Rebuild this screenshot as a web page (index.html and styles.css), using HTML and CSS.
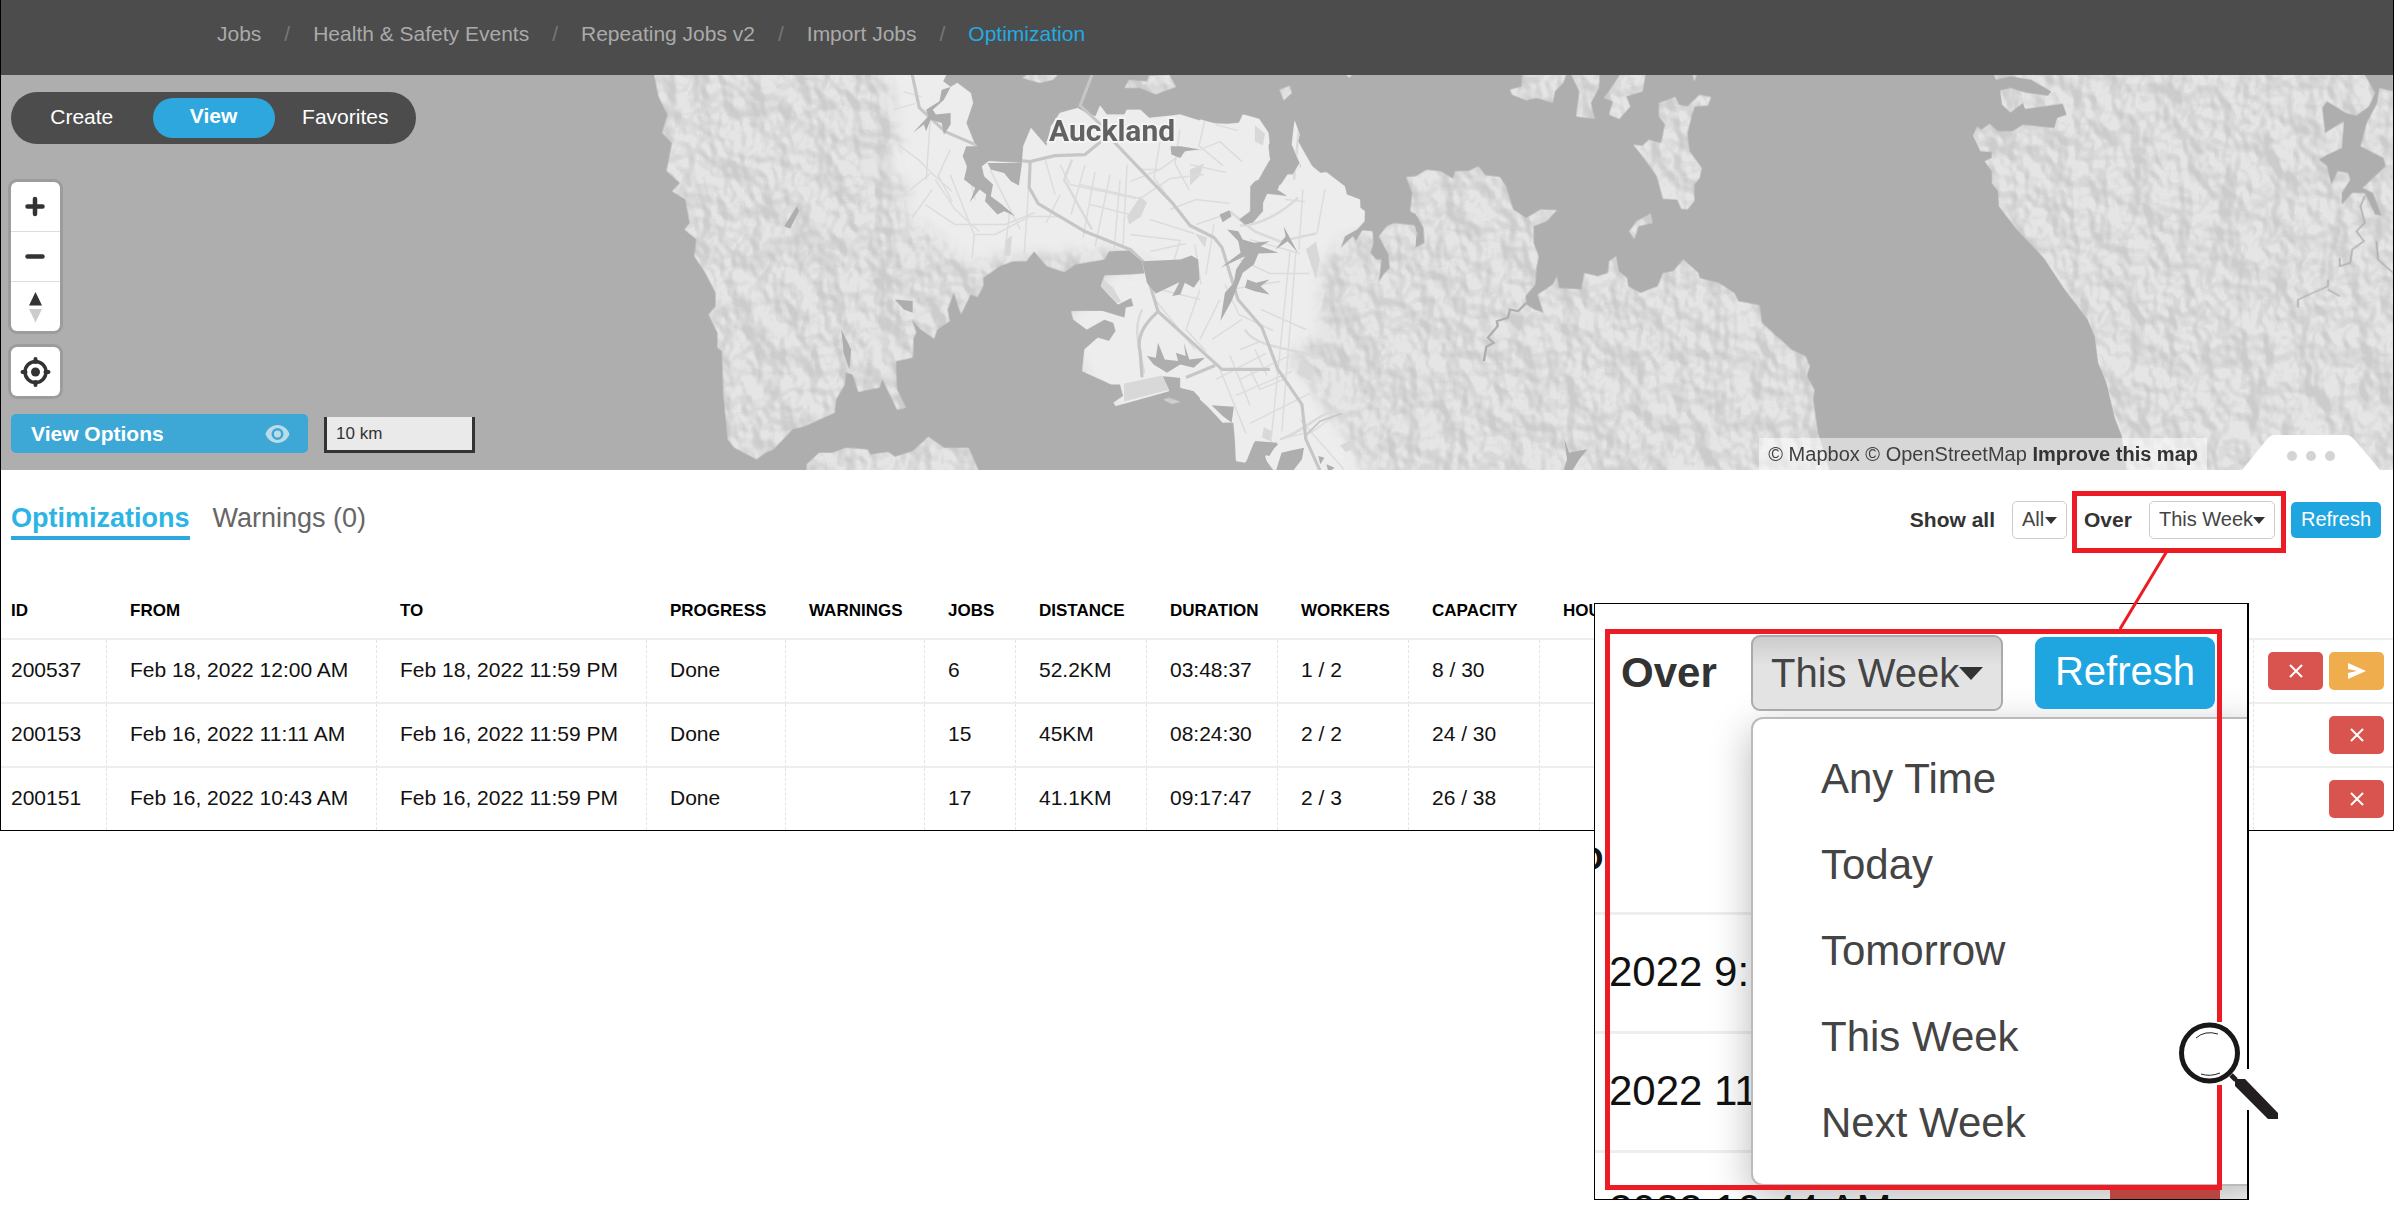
FILE: index.html
```html
<!DOCTYPE html>
<html lang="en">
<head>
<meta charset="utf-8">
<title>Optimization</title>
<link rel="stylesheet" href="styles.css">
</head>
<body>
<div class="page">
<div class="app">
  <nav class="topnav" aria-label="Sections">
    <a href="#">Jobs</a><span class="sep">/</span>
    <a href="#">Health &amp; Safety Events</a><span class="sep">/</span>
    <a href="#">Repeating Jobs v2</a><span class="sep">/</span>
    <a href="#">Import Jobs</a><span class="sep">/</span>
    <a href="#" class="current">Optimization</a>
  </nav>

  <section class="map" aria-label="Map">
    <svg class="map-art" viewBox="0 75 2394 396" preserveAspectRatio="xMidYMid slice" aria-hidden="true">
      <defs>
        <filter id="relief" x="0" y="0" width="100%" height="100%" color-interpolation-filters="sRGB">
          <feTurbulence type="fractalNoise" baseFrequency="0.035 0.028" numOctaves="3" seed="8" result="n"/>
          <feColorMatrix in="n" type="matrix" values="0 0 0 0 0  0 0 0 0 0  0 0 0 0 0  1 0 0 0 0" result="h"/>
          <feDiffuseLighting in="h" surfaceScale="18" diffuseConstant="1" lighting-color="#fff" result="l"><feDistantLight azimuth="315" elevation="50"/></feDiffuseLighting>
          <feComponentTransfer in="l" result="t">
            <feFuncR type="discrete" tableValues=".8 .81 .82 .83 .84 .85 .86 .87 .885 .9"/>
            <feFuncG type="discrete" tableValues=".8 .81 .82 .83 .84 .85 .86 .87 .885 .9"/>
            <feFuncB type="discrete" tableValues=".8 .81 .82 .83 .84 .85 .86 .87 .885 .9"/>
          </feComponentTransfer>
          <feComposite in="t" in2="SourceAlpha" operator="in"/>
        </filter>
        <filter id="soft" x="-10%" y="-10%" width="120%" height="120%"><feGaussianBlur stdDeviation="7"/></filter>
        <g id="west" transform="translate(600 0) scale(.4464 .3333)">
          <path d="M120 225L130 290L150 345L138 400L160 430L148 515L178 550L160 575L190 600L200 670L188 690L215 720L210 770L235 820L258 880V920L242 945L262 1000V1045L272 1055L275 1180L285 1320L300 1345L350 1380L370 1360L388 1350L430 1290L460 1280L525 1240L528 1200L548 1155L550 1120L565 1125L578 1178L625 1165L632 1140L650 1190L665 1232L685 1225L665 1170L662 1085L700 1075L702 1015L708 1000L698 960L718 990L748 1018L755 990L783 965L778 930L792 880L808 945L830 885L845 893L858 860V835L895 800L925 785H955L972 755L1000 800L1040 818L1065 795L1130 780L1140 755L1185 752L1215 785L1220 822L1195 825L1130 828L1122 860L1160 915L1190 895L1195 920L1178 925L1175 955L1125 935L1055 935L1060 960L1090 990L1130 960L1150 970L1155 995L1140 1025L1115 1015L1085 1050L1080 1115L1145 1155H1165L1172 1190L1150 1210L1155 1220L1275 1175L1260 1130L1300 1135V1165L1330 1175L1395 1270L1420 1265L1425 1385L1445 1390L1470 1345L1568 1420V490L1550 530L1520 560L1540 590L1495 600L1490 640L1470 670L1440 680L1420 650L1455 630V550L1475 540L1500 480L1495 400L1475 360L1440 345L1430 375L1360 370L1300 345L1230 355L1210 330L1180 330L1175 345L1135 345L1120 318L1110 350L1095 345L1070 325L1030 340L1010 380L1000 440L965 385L948 440L945 490L870 485L838 430L820 370L835 310L830 280L800 250L785 262L768 245L775 225Z"/>
          <path d="M1175 265L1185 240L1225 245L1230 228L1275 225L1290 262L1245 284L1210 265ZM945 235L955 225H1025L1015 240L985 250ZM462 1420V1395L490 1360H520L550 1345L600 1350L605 1365L645 1358L660 1372L700 1355L735 1312L770 1345H825L850 1420ZM1262 1200L1275 1195L1300 1208L1280 1214Z"/>
        </g>
        <g id="east" transform="translate(1200 60) scale(.4082 .3333)">
          <path d="M0 180L50 195L95 190L108 165L145 178L168 220L170 250L165 265L172 300L150 330L145 350L123 380L122 455L95 480L110 497L130 490L155 455V430L165 403L215 410L190 390L215 345H235L248 320L225 255L232 183L244 225L240 245L275 320L295 340L310 338L355 380L360 405L392 420L393 445L404 455L403 485L385 510L355 530L345 565L375 530L382 545L398 513L423 515L425 550L418 580L432 600L445 600L438 668L450 645L465 625L462 585L438 530L458 500L475 490L525 497L533 520L528 565L550 550L548 505L530 465L515 455L520 400L505 352L530 350L555 330L590 335L620 357L625 335L660 333L682 320L700 347L735 352L750 380L768 450L800 475L835 450L875 452L850 485L818 500V550L830 590L825 625L822 675L798 710L800 735L820 750L842 760L828 705L865 675L875 650L880 685L935 690L942 640L975 650L1000 640L1003 605L1020 590L1027 635L1047 655L1050 680L1080 700L1122 680L1135 640L1160 635L1185 600L1222 640L1225 655L1272 670L1310 700L1320 725L1372 737L1378 790L1450 870L1485 890L1495 920L1488 950L1507 992L1503 1020L1515 1120L1545 1240H185L160 1200L130 1190L110 1210L90 1195L82 1090L60 1088L0 1020Z"/>
          <path d="M790 45L788 80L760 90L765 105L800 122L825 115L865 130L870 95L890 70L898 45ZM910 45L930 95L922 170L968 178L958 130L978 85L980 45ZM1030 45L1005 90L990 115L1012 125L1003 165L1028 178L1055 140L1045 110L1085 95L1092 45ZM1125 130L1165 112L1175 135L1195 140L1225 105L1253 112L1245 138L1212 140L1195 220L1200 275L1230 325L1225 355L1212 375V425L1195 450L1180 448L1170 420L1135 418L1120 350L1085 290L1062 255L1085 258L1100 240L1130 250L1140 195L1125 170ZM1070 485L1105 462L1110 490L1075 500L1065 540L1052 515ZM195 90L220 78L225 100L205 122ZM358 45H375L366 54ZM1208 45H1218L1212 65Z"/>
        </g>
        <g id="penin" transform="translate(1740 60) scale(.4171 .3333)">
          <path d="M610 45L615 60L650 50L700 60L748 95L740 108L690 100L650 85L625 92L630 135L650 158L680 130L685 148L775 132L785 165L762 175L755 205L680 195L655 215H620L600 192L580 210L570 200L560 228L578 275L605 277V295L588 305L605 335V370L620 395L622 440L665 510L730 595L780 690L835 780L852 830L860 910L880 970L900 1075L917 1130L930 1240H1568V45Z"/>
        </g>
        <clipPath id="coast">
          <path transform="translate(600 0) scale(.4464 .3333)" d="M120 225L258 880L300 1345L858 860V835L895 800L925 785H955L972 755L1000 800L1040 818L1065 795L1130 780L1140 755L1185 752L1215 785L1220 822L1195 825L1130 828L1122 860L1160 915L1190 895L1195 920L1178 925L1175 955L1125 935L1055 935L1060 960L1090 990L1130 960L1150 970L1155 995L1140 1025L1115 1015L1085 1050L1080 1115L1145 1155H1165L1172 1190L1150 1210L1155 1220L1275 1175L1260 1130L1300 1135V1165L1330 1175L1395 1270L1420 1265L1425 1385L1445 1390L1470 1345L1568 1420V490L1550 530L1520 560L1540 590L1495 600L1490 640L1470 670L1440 680L1420 650L1455 630V550L1475 540L1500 480L1495 400L1475 360L1440 345L1430 375L1360 370L1300 345L1230 355L1210 330L1180 330L1175 345L1135 345L1120 318L1110 350L1095 345L1070 325L1030 340L1010 380L1000 440L965 385L948 440L945 490L870 485L838 430L820 370L835 310L830 280L800 250L785 262L768 245L775 225Z"/>
          <path transform="translate(1200 60) scale(.4082 .3333)" d="M0 180L50 195L95 190L108 165L145 178L168 220L170 250L165 265L172 300L150 330L145 350L123 380L122 455L95 480L110 497L130 490L155 455V430L165 403L215 410L190 390L215 345H235L248 320L225 255L232 183L244 225L240 245L275 320L295 340L310 338L355 380L360 405L392 420L393 445L404 455L403 485L385 510L355 530L345 565L375 530L382 545L398 513L423 515L425 550L640 1240H185L160 1200L130 1190L110 1210L90 1195L82 1090L60 1088L0 1020Z"/>
        </clipPath>
      </defs>
      <rect y="75" width="2394" height="396" fill="#aeaeae"/>
      <g filter="url(#relief)"><use href="#west"/><use href="#east"/><use href="#penin"/></g>
      <g clip-path="url(#coast)">
        <g fill="#ededed" filter="url(#soft)">
          <path d="M890 60L893 110L904 148L880 158L910 190L912 218L962 258L1000 258L1110 250L1160 270L1110 270L1060 330L1100 400L1230 500H1380L1335 420L1290 360L1318 330L1320 270L1335 245L1375 230L1370 180L1300 110L1270 60Z"/>
        </g>
        <g fill="#d8d8d8"><path d="M1140 197l7 6-6 14-12 8-2-8zM1190 170l14-6-4 12-10 10zM1124 384l38-8 8 14-46 12zM1006 240l6-4-2 20h-6zM1195 234l12 4-2 10zM1306 250l10-8 4 18-4 20zM1301 360l14 10-4 12-14-8zM1264 428l8 4-2 10-8-4zM1101 278l12 10 8 14-6 2-14-16zM1340 446l14-6 2 8-10 5zM1255 126l10 8-2 12-8-4zM1118 258l6-4v6z"/></g>
        <g fill="none" stroke="#dcdcdc" stroke-width="1.5" stroke-linejoin="round">
          <path d="M893 110l22-6M903 92l18 5M898 145l20 15 14 14 20 18M930 120l-4 60M950 150l-12 26 14 26M965 160l10 40M910 190l20-16M912 218l20-28M925 205l30 20h50l30-12M935 180l20 30 24 22M950 175l24 60-2 24M975 235h20l34-18h30M990 170l20 40 10 20M1010 210l-6 46M1030 165l-6 90M1045 160l10 35M1060 165l10 20 66 14M1085 165l-14 50M1095 172l-12 66M1110 175l-15 72M1120 180l-6 70M1127 165l-4 80M1080 185l60 14 30-20 34-4M1060 195l-14 28M1090 205l40 10M1140 170l20 0 30-22M1160 142l-6 36 20 28M1180 130l-5 34 14 26M1205 120l-6 26 24 20M1216 125l22 6M1200 150l20-8 22 20M1190 165l36 8M1170 210l26-10 34 4M1196 225l30-10M1130 235l50 6-6 20M1150 220l44 14M1150 252l36-8M1195 245l6 40M1214 225l-8 50M1160 170l-30 12"/>
          <path d="M1290 252l-20 200M1296 252l-14 180M1306 330l-45-20M1230 290l50-8M1250 240l50 14M1285 200l20 2M1303 190l-4 60M1325 190l-8 44M1240 260l30 14h40M1225 285l14 30 34 16M1160 290l40 10M1155 300l40 50M1200 290l-14 40 20 22M1240 380l50-24M1220 370l26 64M1216 380l50-26M1250 370l10 20 24-10M1236 396l56-24M1250 424l60-30M1230 356l20 50M1212 340l30-20M1200 340l20-40M1255 350l12 26M1270 345l8 30M1240 350l20-8M1300 420l44 50M1310 434l34-24M1280 440l24-6"/>
        </g>
        <g fill="none" stroke="#dadada" stroke-width="2.5"><path d="M1230 212l25 20 25 10 36-8M1240 226c20 0 44-14 58-28M1300 120l-6 60M1142 310c-10 20-2 40 2 64M1245 330c10 20 60 20 80 30M1280 440c30-10 40-30 60-28M1072 160l-8 20 28 50"/></g>
        <g fill="none" stroke="#c6c6c6" stroke-width="3.2" stroke-linejoin="round">
          <path d="M912 75L919 108L945 132L975 145L990 158L1030 162L1055 156L1085 155L1108 136L1150 180L1172 203L1190 226L1214 238L1222 248L1238 300L1262 328L1278 370L1302 405L1306 440L1324 480"/>
          <path d="M1030 162L1029 188L1038 204L1085 232L1130 250L1143 262L1158 312L1222 370L1270 370M1158 312Q1135 332 1140 352L1142 378M1215 366L1186 378"/>
        </g>
        <g fill="none" stroke="#c8c8c8" stroke-width="2"><path d="M1306 436l14-14 22-8"/></g>
      </g>
      <path d="M1092 75L1080 106L1104 128" fill="none" stroke="#c6c6c6" stroke-width="3"/>
      <g fill="#aeaeae" transform="translate(600 0) scale(.4464 .3333)">
        <path d="M785 262L770 300L745 330L752 345L785 340V375L770 405L765 370L740 360L730 395L725 375L700 400L735 350L730 330L760 305L765 270ZM820 440L850 440L875 480L855 500L860 530L880 555L875 590L900 615L930 650L905 635L890 645L862 605L865 585L850 570L828 608L840 565L815 540L822 500L812 470ZM868 490L945 490L938 558L920 545L905 520L875 510ZM1215 785L1300 780L1325 768L1340 780L1343 840L1330 865L1310 850L1300 885L1282 890L1298 848L1245 882L1225 850ZM440 620L445 635L425 688L412 680ZM540 990L562 1050L558 1110L545 1060ZM660 900L700 905V940L680 930ZM1278 440L1300 440L1345 450L1310 455L1300 475L1280 465ZM1225 1070L1245 1075L1250 1030L1265 1080L1295 1085L1290 1060L1312 1070L1308 1030L1320 1080L1355 1075L1330 1105L1300 1095L1270 1120L1240 1095ZM1388 645L1410 632L1415 650L1395 668ZM1405 690L1430 695L1440 720L1465 730L1500 725L1480 740L1520 760L1475 762L1465 795L1440 820L1425 870L1415 905L1390 965L1400 880L1420 850L1425 810L1445 770L1390 805L1435 760L1430 725ZM1450 840L1470 850L1500 840L1480 860L1500 885L1465 875L1445 865ZM1370 1218L1420 1222L1415 1270L1395 1250ZM1465 1330L1520 1335L1490 1370L1500 1412H1440Z"/>
      </g>
      <g fill="#aeaeae" transform="translate(1200 60) scale(.4082 .3333)">
        <path d="M205 500L240 580L215 545L185 570L210 530ZM135 1145L190 1150L170 1190L135 1180L115 1210L100 1240L125 1190ZM200 1180L255 1165L250 1200L225 1240H185ZM290 1190L305 1195L295 1215ZM310 1215L330 1225L315 1240ZM893 1138L905 1180L950 1170L930 1200L910 1240H890L900 1200Z"/>
        <path d="M800 730L780 755L760 750L755 775L728 785L730 800L706 835L720 850L702 862L696 905" fill="none" stroke="#aeaeae" stroke-width="6"/>
      </g>
      <g fill="#aeaeae" transform="translate(1740 60) scale(.4171 .3333)">
        <path d="M1500 45L1525 100L1510 140L1480 168L1455 160L1410 125L1398 145L1405 220L1450 185L1445 265L1410 285L1390 300L1410 320L1420 375L1435 335L1460 340L1465 360L1445 400V435L1470 400H1500L1525 465L1540 468L1520 400L1495 385L1550 320L1545 295L1490 260L1505 190L1530 130L1535 85L1568 95V45Z"/>
        <path d="M1500 410L1490 440L1500 490L1480 515L1498 545L1470 570L1465 610L1440 620V595M1412 660V680L1340 720V745M1412 690L1440 710M1528 545L1532 600L1568 640" fill="none" stroke="#aeaeae" stroke-width="4"/>
      </g>
      <text class="map-city" x="1112" y="141" text-anchor="middle">Auckland</text>
    </svg>

    <div class="mode" role="group" aria-label="Mode">
      <button type="button">Create</button>
      <button type="button" class="on">View</button>
      <button type="button">Favorites</button>
    </div>
    <div class="map-left">
      <div class="ctrl">
        <button type="button" aria-label="Zoom in"><svg viewBox="0 0 49 49"><path d="M24 17v15M16.500 24.500h15" stroke="#333" stroke-width="4.500" stroke-linecap="round"/></svg></button>
        <button type="button" aria-label="Zoom out"><svg viewBox="0 0 49 49"><path d="M16.500 24.500h15" stroke="#333" stroke-width="4.500" stroke-linecap="round"/></svg></button>
        <button type="button" aria-label="Reset north"><svg viewBox="0 0 49 49"><path d="M24.500 10l6.500 13.500h-13z" fill="#333"/><path d="M24.500 40.500l-6.500-13.500h13z" fill="#ccc"/></svg></button>
      </div>
      <div class="ctrl">
        <button type="button" aria-label="My location"><svg viewBox="0 0 49 49"><circle cx="24.500" cy="25" r="10.500" fill="none" stroke="#333" stroke-width="3.500"/><circle cx="24.500" cy="25" r="4.500" fill="#333"/><path d="M24.500 12v3M24.500 35v3M11.500 25h3M34.500 25h3" stroke="#333" stroke-width="4" stroke-linecap="round"/></svg></button>
      </div>
    </div>
    <div class="map-bottom">
      <button type="button" class="view-options">View Options
        <svg class="eye" viewBox="0 0 24 18"><path fill="#bcdbe8" fill-rule="evenodd" d="M12 0C6.500 0 2 3.500 0 9c2 5.500 6.500 9 12 9s10-3.500 12-9C22 3.500 17.500 0 12 0zm0 15a6 6 0 1 1 0-12 6 6 0 0 1 0 12zm0-2.500a3.500 3.500 0 1 0 0-7 3.500 3.500 0 0 0 0 7z"/></svg>
      </button>
      <div class="scale">10 km</div>
    </div>
    <div class="credit"><a href="#">© Mapbox</a> <a href="#">© OpenStreetMap</a> <a href="#" class="strong">Improve this map</a></div>
    <button type="button" class="handle" aria-label="Resize panel">
      <svg viewBox="0 0 140 36"><path d="M0 36L26 4Q29 1 33 1H104Q108 1 111 4L138 36Z" fill="#fff"/><g fill="#d4d4d4"><circle cx="50" cy="22" r="5"/><circle cx="69" cy="22" r="5"/><circle cx="88" cy="22" r="5"/></g></svg>
    </button>
  </section>

  <section class="panel">
    <header class="bar">
      <div class="tabs">
        <a href="#" class="tab active">Optimizations</a>
        <a href="#" class="tab">Warnings (0)</a>
      </div>
      <form class="filters">
        <label for="show">Show all</label>
        <span class="pick all"><select id="show"><option>All</option></select></span>
        <div class="marked">
          <label for="over">Over</label>
          <span class="pick week"><select id="over"><option>This Week</option><option>Any Time</option><option>Today</option></select></span>
        </div>
        <button type="button" class="refresh">Refresh</button>
      </form>
    </header>
    <table>
      <colgroup><col class="c-id"><col class="c-date"><col class="c-date"><col class="c-prog"><col class="c-prog"><col class="c-jobs"><col class="c-num"><col class="c-num"><col class="c-num"><col class="c-num"><col><col class="c-act"></colgroup>
      <thead><tr><th>ID</th><th>FROM</th><th>TO</th><th>PROGRESS</th><th>WARNINGS</th><th>JOBS</th><th>DISTANCE</th><th>DURATION</th><th>WORKERS</th><th>CAPACITY</th><th>HOURS</th><th></th></tr></thead>
      <tbody>
        <tr><td>200537</td><td>Feb 18, 2022 12:00 AM</td><td>Feb 18, 2022 11:59 PM</td><td>Done</td><td></td><td>6</td><td>52.2KM</td><td>03:48:37</td><td>1 / 2</td><td>8 / 30</td><td></td>
          <td class="acts"><div><button type="button" class="del" aria-label="Delete"><svg viewBox="0 0 12 12"><path d="M0 0l12 12M12 0L0 12"/></svg></button><button type="button" class="send" aria-label="Send"><svg viewBox="0 0 18 16"><path d="M0 0L18 8L0 16V10L9 8L0 6Z"/></svg></button></div></td></tr>
        <tr><td>200153</td><td>Feb 16, 2022 11:11 AM</td><td>Feb 16, 2022 11:59 PM</td><td>Done</td><td></td><td>15</td><td>45KM</td><td>08:24:30</td><td>2 / 2</td><td>24 / 30</td><td></td>
          <td class="acts"><div><button type="button" class="del" aria-label="Delete"><svg viewBox="0 0 12 12"><path d="M0 0l12 12M12 0L0 12"/></svg></button></div></td></tr>
        <tr><td>200151</td><td>Feb 16, 2022 10:43 AM</td><td>Feb 16, 2022 11:59 PM</td><td>Done</td><td></td><td>17</td><td>41.1KM</td><td>09:17:47</td><td>2 / 3</td><td>26 / 38</td><td></td>
          <td class="acts"><div><button type="button" class="del" aria-label="Delete"><svg viewBox="0 0 12 12"><path d="M0 0l12 12M12 0L0 12"/></svg></button></div></td></tr>
      </tbody>
    </table>
  </section>
</div>

<aside class="closeup" aria-label="Period menu, enlarged">
  <div class="sheet">
    <div class="under">
      <div class="under-head">O</div>
      <div class="under-row">2022 9:</div>
      <div class="under-row">2022 11</div>
      <div class="under-row">2022 10:44 AM</div>
    </div>
    <div class="front">
      <div class="front-bar">
        <span class="big-label">Over</span>
        <button type="button" class="big-pick" aria-expanded="true">This Week<i class="caret"></i></button>
        <button type="button" class="big-refresh">Refresh</button>
      </div>
      <ul class="menu">
        <li><button type="button">Any Time</button></li>
        <li><button type="button">Today</button></li>
        <li><button type="button">Tomorrow</button></li>
        <li><button type="button">This Week</button></li>
        <li><button type="button">Next Week</button></li>
      </ul>
    </div>
    <div class="under-del"></div>
    <div class="red"></div>
  </div>
  <svg class="lead" viewBox="0 0 50 80" aria-hidden="true"><path d="M48 0L1 78" stroke="#ed1c24" stroke-width="3"/></svg>
  <svg class="glass" viewBox="2170 1015 110 110" aria-hidden="true">
    <path d="M2208 1022h18v63h-18zM2236 1069h14v41h-14z" fill="#fff"/>
    <circle cx="2208.500" cy="1053" r="28" fill="#fff" stroke="#1a1718" stroke-width="5"/>
    <path d="M2230 1075l5 5" stroke="#231f20" stroke-width="5"/>
    <path d="M2234 1079h10l33 34v6h-10l-33-33z" fill="#231f20"/>
    <path d="M2195 1038q9-8 22-4M2200 1074q9 3 19-1" fill="none" stroke="#222"/>
  </svg>
</aside>
</div>
</body>
</html>
```
FILE: styles.css
```css
* { box-sizing: border-box; }
body { margin: 0; background: #fff; color: #111; font: 21px/1.2 "Liberation Sans", Arial, sans-serif; }
a { color: inherit; text-decoration: none; }
button, select { font: inherit; color: inherit; border: 0; padding: 0; margin: 0; background: none; cursor: pointer; }
button svg { display: block; }

.page { position: relative; min-height: 100vh; }
.app { border: solid #000; border-width: 0 1px 1px; }

.topnav { display: flex; align-items: center; gap: 23px; height: 75px; padding: 0 216px 8px; background: #4c4c4c; color: #aaa; }
.topnav .sep { color: #777; }
.topnav .current { color: #23abe2; }

.map { position: relative; height: 395px; overflow: hidden; background: #aeaeae; }
.map-art { display: block; width: 100%; height: 100%; }
.map-city { font: bold 30px "Roboto", "Liberation Sans", sans-serif; fill: #626262; stroke: #f4f4f4; stroke-width: 4px; paint-order: stroke; }
.mode { position: absolute; left: 10px; top: 17px; display: flex; align-items: center; width: 405px; height: 52px; padding-bottom: 2px; border-radius: 26px; background: #4c4c4c; color: #fff; }
.mode button { flex: 1; height: 40px; }
.mode .on { flex: 0 0 122px; margin-top: 2px; padding-bottom: 4px; border-radius: 20px; background: #2ea7de; font-weight: bold; }
.map-left { position: absolute; left: 10px; top: 107px; display: grid; gap: 16px; }
.ctrl { width: 49px; border-radius: 6px; background: #fff; box-shadow: 0 0 0 3px rgba(0, 0, 0, .1); }
.ctrl button { display: block; width: 49px; height: 49px; }
.ctrl button + button { height: 50px; border-top: 1px solid #ddd; }
.ctrl svg { width: 49px; height: 49px; }
.map-bottom { position: absolute; left: 10px; bottom: 17px; display: flex; align-items: flex-end; gap: 16px; }
.view-options { display: flex; align-items: center; justify-content: space-between; width: 297px; height: 39px; padding: 0 18px 0 20px; border-radius: 5px; background: #3da8d6; color: #fff; font-weight: bold; }
.eye { width: 25px; height: 18px; }
.scale { width: 151px; height: 36px; padding-left: 9px; border: solid #333; border-width: 0 3px 3px; background: #eaeaea; color: #333; font-size: 17px; line-height: 33px; }
.credit { position: absolute; right: 186px; bottom: 0; padding: 0 9px; background: rgba(255, 255, 255, .5); color: #404040; font-size: 20px; line-height: 32px; }
.credit .strong { font-weight: bold; color: #333; }
.handle { position: absolute; right: 11px; bottom: 0; width: 140px; height: 36px; }

.bar { display: flex; align-items: center; justify-content: space-between; height: 100px; padding: 0 12px 0 10px; }
.tabs { display: flex; gap: 23px; font-size: 27px; line-height: 36px; }
.tab { color: #666; padding-bottom: 4px; }
.tab.active { padding-bottom: 0; border-bottom: 4px solid #2ea7de; color: #2cb5e4; font-weight: bold; }
.filters { display: flex; align-items: center; color: #333; }
.filters label { font-weight: bold; }
.marked { display: flex; align-items: center; justify-content: space-between; width: 214px; height: 62px; margin: 4px 5px 0; padding: 0 6px 4px 7px; border: 5px solid #ed1c24; }
.pick { position: relative; height: 38px; font-size: 20px; }
.pick select { appearance: none; width: 100%; height: 38px; padding: 0 9px 2px; border: 1px solid #ccc; border-radius: 5px; background: #fff; color: #444; }
.pick::after { content: ""; position: absolute; right: 10px; top: 16px; border: solid transparent; border-width: 7px 6px 0; border-top-color: #333; pointer-events: none; }
.all { width: 55px; margin-left: 17px; }
.week { width: 126px; }
.refresh { width: 90px; height: 36px; padding-bottom: 2px; border-radius: 5px; background: #1fa6e0; color: #fff; font-size: 20px; }

table { width: 100%; table-layout: fixed; border-collapse: separate; border-spacing: 0; }
.c-id { width: 106px; }
.c-date { width: 270px; }
.c-prog { width: 139px; }
.c-jobs { width: 91px; }
.c-num { width: 131px; }
.c-act { width: 139px; }
th { height: 70px; padding: 14px 0 0 23px; color: #000; font-size: 17px; text-align: left; border-bottom: 2px solid #eee; }
td { height: 64px; padding: 0 0 2px 23px; white-space: nowrap; border-right: 1px dashed #e4e4e4; border-bottom: 2px solid #eee; }
th:first-child, td:first-child { padding-left: 10px; }
tr:last-child td { border-bottom: 0; height: 62px; }
td:last-child { border-right: 0; }
td.acts { padding: 0 9px 0 0; }
.acts div { display: flex; justify-content: flex-end; gap: 6px; }
.acts button { display: grid; place-items: center; width: 55px; height: 38px; border-radius: 5px; }
.del { background: #d9534f; }
.del svg { width: 12px; height: 12px; overflow: visible; fill: none; stroke: #fff; stroke-width: 2px; }
.send { background: #f0ad4e; }
.send svg { width: 18px; height: 16px; fill: #fff; }

.closeup { position: absolute; right: 145px; top: 603px; width: 655px; }
.sheet { position: relative; height: 597px; overflow: hidden; border: 1px solid #000; border-right-width: 2px; background: #fff; }
.under { position: absolute; inset: 0; font-size: 42px; color: #111; }
.under-head { height: 311px; padding-top: 234px; margin-left: -18px; font-size: 34px; font-weight: bold; border-bottom: 3px solid #eee; }
.under-row { height: 119px; padding-left: 14px; line-height: 114px; white-space: nowrap; border-bottom: 3px solid #eee; }
.under-del { position: absolute; right: 27px; bottom: 0; width: 110px; height: 12px; background: #b94542; }
.front { position: absolute; inset: 0; }
.front-bar { display: flex; align-items: center; height: 113px; padding: 25px 0 0 26px; color: #333; font-size: 40px; }
.big-label { width: 130px; font-size: 42px; font-weight: bold; }
.big-pick { display: flex; align-items: center; width: 252px; height: 76px; padding-left: 18px; border: 2px solid #aaa; border-radius: 9px; background: linear-gradient(#ccc, #e3e3e3 40%); color: #444; }
.caret { border: solid transparent; border-width: 13px 12px 0; border-top-color: #333; }
.big-refresh { width: 180px; height: 72px; margin-left: 32px; padding-bottom: 4px; border-radius: 9px; background: #1fa6e0; color: #fff; }
.menu { list-style: none; margin: 0 -20px 0 156px; padding: 17px 0 18px; border: 2px solid #bbb; border-radius: 12px; background: #fff; box-shadow: 0 12px 40px rgba(0, 0, 0, .28); }
.menu button { display: block; width: 100%; height: 86px; padding-left: 68px; text-align: left; font-size: 42px; color: #444; }
.red { position: absolute; left: 10px; right: 25px; top: 25px; bottom: 9px; border: 5px solid #ed1c24; }
.lead { position: absolute; right: 80px; top: -52px; width: 50px; height: 80px; }
.glass { position: absolute; right: -32px; bottom: 75px; width: 110px; height: 110px; }
```
